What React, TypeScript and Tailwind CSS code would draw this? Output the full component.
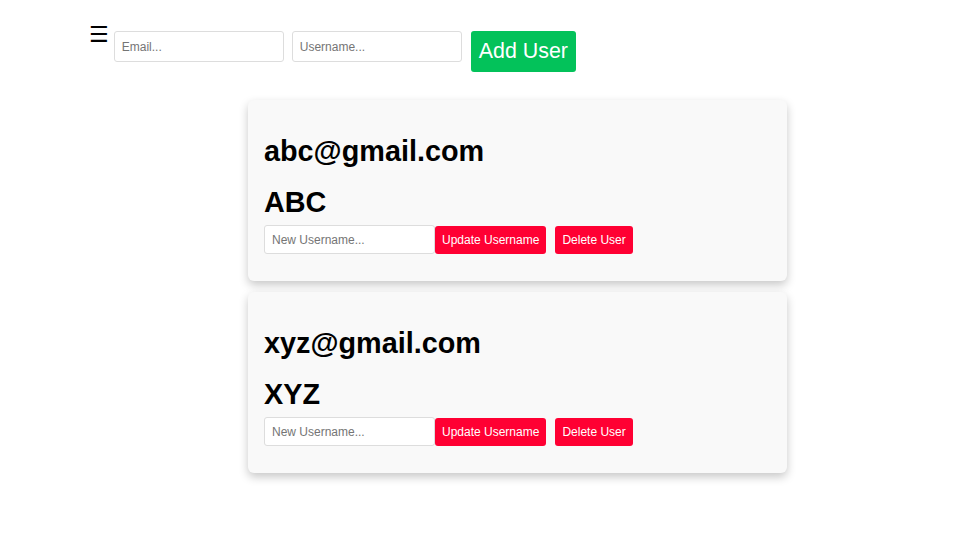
import { useState } from "react";

type User = {
  id: number;
  email: string;
  username: string;
};

const initialUsers: User[] = [
  { id: 1, email: "abc@gmail.com", username: "ABC" },
  { id: 2, email: "xyz@gmail.com", username: "XYZ" },
];

function UserCard({ user }: { user: User }) {
  return (
    <div className="w-[539px] rounded-[6px] bg-[#f9f9f9] px-4 pt-[35px] pb-[27px] shadow-[0_4px_10px_0_rgba(0,0,0,0.22)]">
      <h2 className="text-[28.8px] leading-[33px] font-bold text-black">
        {user.email}
      </h2>
      <h2 className="mt-[18px] text-[28.8px] leading-[33px] font-bold text-black">
        {user.username}
      </h2>
      <div className="mt-[6px] flex items-center">
        <input
          type="text"
          placeholder="New Username..."
          className="h-[29px] w-[171px] rounded-[3px] border border-[#dddddd] bg-white px-[7px] text-[12px] text-black outline-none placeholder:text-[#757575]"
        />
        <button
          type="button"
          className="h-[28px] rounded-[3px] bg-[#ff0033] px-[7px] text-[12px] text-white"
        >
          Update Username
        </button>
        <button
          type="button"
          className="ml-[9px] h-[28px] rounded-[3px] bg-[#ff0033] px-[7px] text-[12px] text-white"
        >
          Delete User
        </button>
      </div>
    </div>
  );
}

export default function App() {
  const [users] = useState<User[]>(initialUsers);

  return (
    <div className="min-h-screen bg-white font-['Liberation_Sans',Arial,sans-serif] text-black">
      <div className="flex items-start pt-[31px] pl-[89px]">
        <span className="-mt-[7px] mr-[5px] font-['DejaVu_Sans',sans-serif] text-[22px] leading-none">
          ☰
        </span>
        <input
          type="text"
          placeholder="Email..."
          className="h-[31px] w-[170px] rounded-[3px] border border-[#dddddd] bg-white px-[7px] text-[12px] outline-none placeholder:text-[#757575]"
        />
        <input
          type="text"
          placeholder="Username..."
          className="ml-2 h-[31px] w-[170px] rounded-[3px] border border-[#dddddd] bg-white px-[7px] text-[12px] outline-none placeholder:text-[#757575]"
        />
        <button
          type="button"
          className="ml-[9px] h-[41px] rounded-[3px] bg-[#03c25a] px-2 text-[21.4px] leading-[25px] text-white"
        >
          Add User
        </button>
      </div>

      <div className="mt-[28px] ml-[248px] flex flex-col gap-[11px]">
        {users.map((user) => (
          <UserCard key={user.id} user={user} />
        ))}
      </div>
    </div>
  );
}
